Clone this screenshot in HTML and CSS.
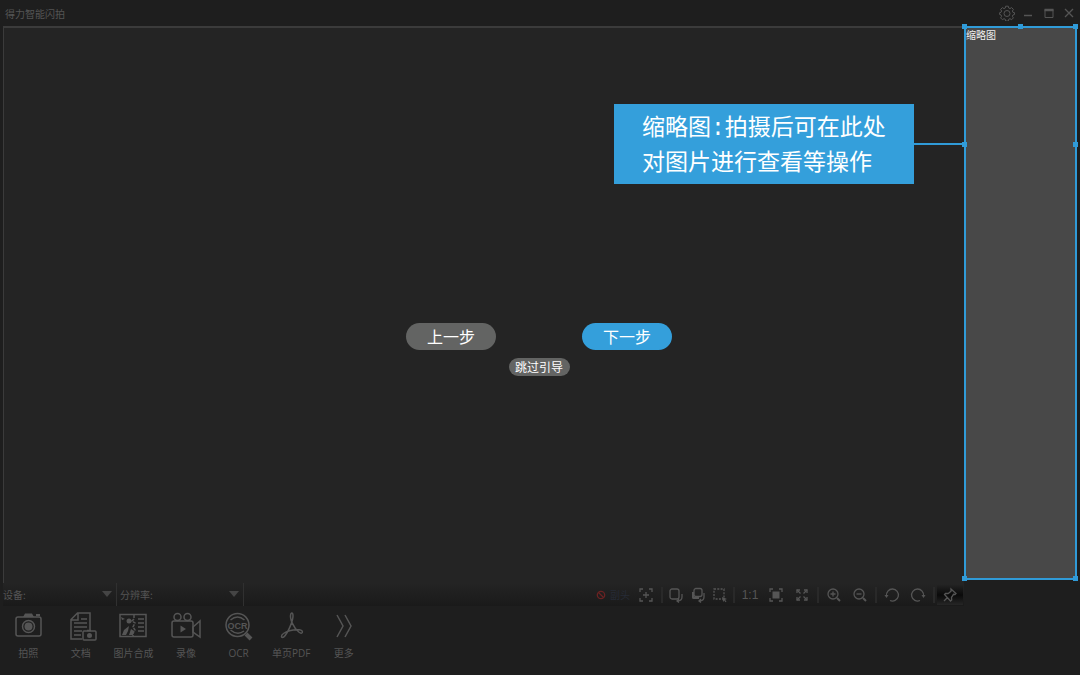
FILE: index.html
```
<!DOCTYPE html>
<html lang="zh-Hans">
<head>
    <meta charset="UTF-8">
    <meta name="viewport" content="width=device-width, initial-scale=1.0">
    <title>得力智能闪拍</title>
    <link rel="stylesheet" href="styles.css">
</head>
<body>
    <header class="titlebar">
        <h1>得力智能闪拍</h1>
        <div class="window-buttons">
            <button type="button" aria-label="设置">
                <svg width="16" height="16" viewBox="0 0 16 16"><path d="M6.700 1.200h2.600l.4 1.800 1.300.6 1.600-1 1.800 1.800-1 1.600.5 1.300 1.600.4v1.800l-1.600.5-.5 1.300 1 1.600-1.800 1.800-1.600-1-1.300.6-.4 1.700H6.700l-.4-1.700-1.300-.6-1.600 1-1.800-1.800 1-1.600L2 9.900.6 9.500V7.700L2 7.300 2.600 6l-1-1.600 1.800-1.800 1.600 1 1.300-.6z"/><circle cx="8" cy="8.500" r="3"/></svg>
            </button>
            <button type="button" aria-label="最小化">
                <svg width="12" height="12" viewBox="0 0 12 12"><path d="M1 8.500h8" stroke-width="1.500"/></svg>
            </button>
            <button type="button" aria-label="最大化">
                <svg width="12" height="12" viewBox="0 0 12 12"><path d="M2 2.500h8v8H2z"/><path d="M1.500 3h9" stroke-width="2.500"/></svg>
            </button>
            <button type="button" aria-label="关闭">
                <svg width="12" height="12" viewBox="0 0 12 12"><path d="M2 2l8 8M10 2l-8 8" stroke-width="1.300"/></svg>
            </button>
        </div>
    </header>

    <main class="workspace">
        <div class="left">
            <section class="preview"></section>
            <div class="statusbar">
                <div class="field">
                    <label for="device">设备:</label>
                    <span class="select-box"><select id="device"></select></span>
                </div>
                <div class="field">
                    <label for="resolution">分辨率:</label>
                    <span class="select-box"><select id="resolution"></select></span>
                </div>
                <div class="tools">
                    <button type="button" class="sub-camera">
                        <svg width="10" height="10" viewBox="0 0 10 10"><circle cx="5" cy="5" r="3.700"/><path d="M2.500 2.500l5 5"/></svg>
                        副头
                    </button>
                    <button type="button" aria-label="对焦">
                        <svg width="16" height="16" viewBox="0 0 16 16"><path d="M2 5V2h3M11 2h3v3M14 11v3h-3M5 14H2v-3M8 5v6M5 8h6"/></svg>
                    </button>
                    <i class="sep"></i>
                    <button type="button" class="narrow" aria-label="单页旋转">
                        <svg width="16" height="16" viewBox="0 0 16 16"><rect x="2" y="2" width="9" height="10" rx="2"/><path d="M14 7v3q0 4-5 4M11 12l-2 2 2 1.500"/></svg>
                    </button>
                    <button type="button" class="narrow" aria-label="多页旋转">
                        <svg width="16" height="16" viewBox="0 0 16 16"><rect x="4" y="1.500" width="8" height="8" rx="2"/><path class="solid" d="M2 5h2v5h5v2H3.500Q2 12 2 10.500z"/><path d="M14 6v4q0 4-5 4M11 12l-2 2 2 1.500"/></svg>
                    </button>
                    <button type="button" class="narrow" aria-label="选区">
                        <svg width="16" height="16" viewBox="0 0 16 16"><rect x="2" y="2" width="10" height="10" stroke-dasharray="2 1.300"/><path class="solid" d="M10 10l5 2-2 .8 1.500 1.700-1 .8-1.300-1.700-1 1.400z"/></svg>
                    </button>
                    <i class="sep"></i>
                    <button type="button">1:1</button>
                    <button type="button" aria-label="适合窗口">
                        <svg width="16" height="16" viewBox="0 0 16 16"><path d="M2 5V2h3M11 2h3v3M14 11v3h-3M5 14H2v-3"/><rect class="solid" x="4.500" y="4.500" width="7" height="7"/></svg>
                    </button>
                    <button type="button" aria-label="全屏">
                        <svg width="16" height="16" viewBox="0 0 16 16"><path d="M3 3l3.500 3.500M13 3L9.500 6.500M3 13l3.500-3.500M13 13L9.500 9.500"/><path d="M3 6V3h3M10 3h3v3M13 10v3h-3M6 13H3v-3"/></svg>
                    </button>
                    <i class="sep"></i>
                    <button type="button" aria-label="放大">
                        <svg width="16" height="16" viewBox="0 0 16 16"><circle cx="7" cy="7" r="5"/><path d="M4.500 7h5M7 4.500v5"/><path d="M11 11l3 3" stroke-width="2"/></svg>
                    </button>
                    <button type="button" aria-label="缩小">
                        <svg width="16" height="16" viewBox="0 0 16 16"><circle cx="7" cy="7" r="5"/><path d="M4.500 7h5"/><path d="M11 11l3 3" stroke-width="2"/></svg>
                    </button>
                    <i class="sep"></i>
                    <button type="button" aria-label="左旋转">
                        <svg width="16" height="16" viewBox="0 0 16 16"><path d="M2.500 9A6 6 0 1 1 6 13.500"/><path class="solid" d="M.5 8h4l-2 3z"/></svg>
                    </button>
                    <button type="button" aria-label="右旋转">
                        <svg width="16" height="16" viewBox="0 0 16 16"><path d="M13.500 9A6 6 0 1 0 10 13.500"/><path class="solid" d="M11.500 8h4l-2 3z"/></svg>
                    </button>
                    <i class="sep"></i>
                    <button type="button" class="pin" aria-label="固定">
                        <svg width="16" height="16" viewBox="0 0 16 16"><path d="M9 2l5 4.500-1 1-1.500-.2-2 3 .2 2.700-1.200 1L2.500 7.500l1-1.200 2.700.2L9 4.300zM5.500 10.500L2 14"/></svg>
                    </button>
                </div>
            </div>
        </div>

        <aside class="thumbnails">
            <h2>缩略图</h2>
            <i class="handle top-left"></i>
            <i class="handle top"></i>
            <i class="handle top-right"></i>
            <i class="handle left-side"></i>
            <i class="handle right-side"></i>
            <i class="handle bottom-left"></i>
            <i class="handle bottom-right"></i>
            <p class="tip">缩略图:拍摄后可在此处<br>对图片进行查看等操作</p>
        </aside>
    </main>

    <nav class="toolbar">
        <button type="button">
            <svg width="32" height="32" viewBox="0 0 32 32"><rect x="4" y="7" width="25" height="19" rx="2"/><path class="solid" d="M11 7l2-3.500h7L22 7zM24 4h4v2h-4z"/><circle cx="16.500" cy="16.500" r="6"/><circle class="solid" cx="16.500" cy="16.500" r="4"/></svg>
            拍照
        </button>
        <button type="button">
            <svg width="32" height="32" viewBox="0 0 32 32"><path d="M17 29H6V9.500L12.500 3H25v17M6 10h7V3"/><path d="M16 9h6M9 13h13M9 17h13M9 21h8M9 25h7"/><rect x="18" y="21" width="13" height="9" rx="1"/><path d="M22 20.500h4"/><circle class="solid" cx="24.500" cy="25.500" r="2.500"/></svg>
            文档
        </button>
        <button type="button">
            <svg width="32" height="32" viewBox="0 0 32 32"><path d="M3 4.500h26v22H3z"/><path d="M17 5v4l-2 2 3 2-2 4 2 3-2 3v3" stroke-dasharray="3 1"/><path d="M21 9h6M21 13h6M21 17h6M21 21h6"/><circle class="solid" cx="12" cy="11" r="2.500"/><path class="solid" d="M5 25l2-5 5-4-1 5-2 4zM12 25l2-6 3 2-1 4zM4 7l4 2-3 1z"/></svg>
            图片合成
        </button>
        <button type="button">
            <svg width="32" height="32" viewBox="0 0 32 32"><circle cx="7.500" cy="7" r="3.500"/><circle cx="17.500" cy="7" r="3.500"/><rect x="2" y="11" width="21" height="16" rx="2"/><path class="solid" d="M10.500 15.500l5.500 3.500-5.500 3.500z"/><path d="M23 17l7-6v16l-7-5z"/></svg>
            录像
        </button>
        <button type="button">
            <svg width="32" height="32" viewBox="0 0 32 32"><circle cx="14.500" cy="15" r="11.500"/><path d="M7.500 10q7-6 14 0M7.500 20q7 6 13.500 1"/><text x="14.500" y="19" text-anchor="middle">OCR</text><path d="M23 24l5 5" stroke-width="4"/></svg>
            OCR
        </button>
        <button type="button">
            <svg width="32" height="32" viewBox="0 0 32 32"><path d="M15.800 4c-1.500 5 3 14 8 18 2 1.500 3 1.500 3.500.5s-.5-2.500-3-2.700C18 19.500 12 21 8.500 23.500c-3 2-2.500 5 .3 3.500C13 23 18.500 10 18 5c-.3-2.500-1.700-2.500-2.200-1z"/></svg>
            单页PDF
        </button>
        <button type="button">
            <svg width="32" height="32" viewBox="0 0 32 32"><path d="M9 5l6 11-6 11M17 5l6 11-6 11"/></svg>
            更多
        </button>
    </nav>

    <div class="guide">
        <div class="guide-steps">
            <button type="button" class="prev">上一步</button>
            <button type="button" class="next">下一步</button>
        </div>
        <button type="button" class="skip">跳过引导</button>
    </div>
</body>
</html>
```
FILE: styles.css
```
* {
    box-sizing: border-box;
}

body {
    position: relative;
    display: flex;
    flex-direction: column;
    min-height: 100vh;
    margin: 0;
    background-color: #1e1e1e;
    color: #555;
    font-family: "Noto Sans CJK SC", sans-serif;
    font-size: 10px;
}

h1, h2, p {
    margin: 0;
    font-weight: normal;
}

button {
    display: flex;
    align-items: center;
    justify-content: center;
    padding: 0;
    border: 0;
    background: none;
    color: inherit;
    font: inherit;
}

svg {
    fill: none;
    stroke: currentColor;
}

svg .solid {
    fill: currentColor;
    stroke: none;
}

/* title bar */
.titlebar {
    display: flex;
    align-items: center;
    justify-content: space-between;
    height: 26px;
    padding: 0 5px;
}

.titlebar h1 {
    font-size: 10px;
}

.window-buttons {
    display: flex;
    gap: 8px;
}

/* workspace */
.workspace {
    display: flex;
    flex: 1;
    padding: 0 3px;
}

.left {
    display: flex;
    flex: 1;
    flex-direction: column;
}

.preview {
    flex: 1;
    border-top: 2px solid #3b3b3b;
    border-left: 1px solid #3b3b3b;
    background-color: #242424;
}

.statusbar {
    display: flex;
    height: 23px;
    background: linear-gradient(#242424, #1a1a1a);
}

.field {
    display: flex;
    align-items: center;
    width: 114px;
    margin-right: 3px;
    border-right: 1px solid #303030;
}

.field + .field {
    width: 124px;
}

.select-box {
    position: relative;
    flex: 1;
}

.select-box::after {
    content: "";
    position: absolute;
    top: 6px;
    right: 4px;
    border: 5px solid transparent;
    border-top: 6px solid #454545;
    border-bottom: 0;
    pointer-events: none;
}

.field select {
    display: block;
    width: 100%;
    height: 20px;
    border: 0;
    appearance: none;
    background: none;
    color: inherit;
}

.tools {
    display: flex;
    align-items: center;
    margin-left: auto;
    padding-right: 1px;
}

.tools svg {
    stroke-width: 1.3;
}

.tools button {
    width: 26px;
    height: 20px;
    font-family: "Liberation Sans", "Noto Sans CJK SC", sans-serif;
    font-size: 12px;
}

.tools .narrow {
    width: 22px;
}

.tools .sub-camera {
    gap: 4px;
    width: 40px;
    color: #262b36;
    font-size: 10px;
}

.tools .sub-camera svg {
    color: #6a2222;
}

.tools .pin {
    background: linear-gradient(#222, #0a0a0a 50%, #262626);
}

.sep {
    width: 2px;
    height: 16px;
    margin: 0 2px;
    background-color: #292929;
}

/* thumbnails */
.thumbnails {
    position: relative;
    width: 113px;
    margin-bottom: 26px;
    border: 2px solid #309bd8;
    background-color: #484848;
}

.thumbnails h2 {
    color: #eee;
    font-size: 10px;
    line-height: 14px;
}

.handle {
    position: absolute;
    width: 5px;
    height: 5px;
    background-color: #309bd8;
}

.top-left, .top, .top-right {
    top: -4px;
}

.bottom-left, .bottom-right {
    bottom: -3px;
}

.top-left, .left-side, .bottom-left {
    left: -4px;
}

.top-right, .right-side, .bottom-right {
    right: -3px;
}

.top {
    left: calc(50% - 3px);
}

.left-side, .right-side {
    top: 114px;
}

.tip {
    position: absolute;
    top: 76px;
    right: 100%;
    width: 300px;
    height: 80px;
    margin-right: 52px;
    padding: 8px 0 0 28px;
    background-color: #349fdb;
    color: #fff;
    font-family: "Liberation Mono", "Noto Sans CJK SC", monospace;
    font-size: 23px;
    line-height: 35px;
    white-space: nowrap;
}

.tip::after {
    content: "";
    position: absolute;
    top: 39px;
    left: 100%;
    width: 52px;
    height: 2px;
    background-color: #309bd8;
}

/* bottom toolbar */
.toolbar {
    display: grid;
    grid-template-columns: repeat(7, 1fr);
    width: 368px;
    height: 69px;
    margin-left: 2px;
    padding-top: 4px;
}

.toolbar button {
    flex-direction: column;
    justify-content: flex-start;
    gap: 3px;
    font-family: "Open Sans", "Noto Sans CJK SC", sans-serif;
    line-height: 16px;
    white-space: nowrap;
}

.toolbar svg {
    stroke-width: 1.5;
}

.toolbar text {
    fill: currentColor;
    stroke: none;
    font-family: "Liberation Sans", sans-serif;
    font-size: 9px;
    font-weight: bold;
}

/* guide */
.guide {
    position: absolute;
    inset: 0;
    display: flex;
    flex-direction: column;
    align-items: center;
    justify-content: center;
    gap: 8px;
    padding: 24px 2px 0 0;
    pointer-events: none;
}

.guide button {
    padding-bottom: 2px;
    color: #fff;
    pointer-events: auto;
}

.guide-steps {
    display: flex;
    gap: 86px;
}

.prev, .next {
    width: 90px;
    height: 27px;
    border-radius: 14px;
}

.guide .prev, .guide .next {
    font-size: 16px;
}

.guide .prev, .guide .skip {
    background-color: #636463;
}

.guide .next {
    background-color: #349fdb;
}

.guide .skip {
    width: 61px;
    height: 18px;
    border-radius: 9px;
    font-size: 12px;
}
```
